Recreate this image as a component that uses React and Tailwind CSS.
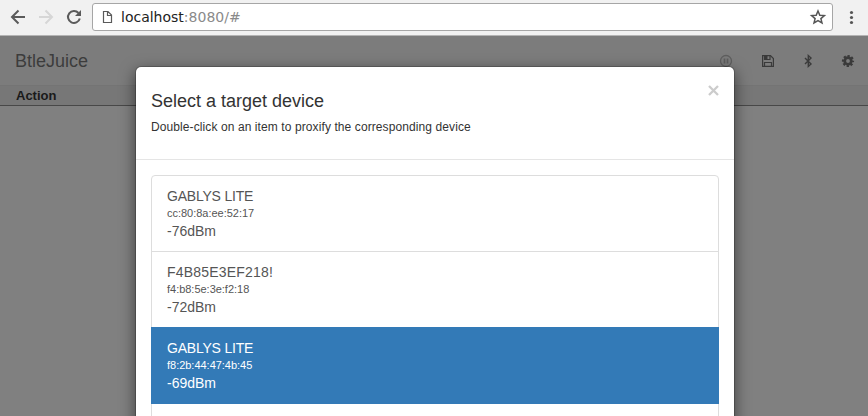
const devices = [
  { name: "GABLYS LITE", mac: "cc:80:8a:ee:52:17", rssi: "-76dBm" },
  { name: "F4B85E3EF218!", mac: "f4:b8:5e:3e:f2:18", rssi: "-72dBm", wide: true },
  { name: "GABLYS LITE", mac: "f8:2b:44:47:4b:45", rssi: "-69dBm", active: true },
  { name: "", mac: "", rssi: "" },
];

function BrowserBar() {
  return (
    <div className="flex h-9 shrink-0 items-start border-b border-[#b4b4b4] bg-[#f1f1f1]">
      <svg width="92" height="35" fill="none" strokeWidth="2">
        <path d="M25 17H12M18.500 10.500L12 17L18.500 23.500" stroke="#5a5a5a" />
        <path d="M39 17H52M45.500 10.500L52 17L45.500 23.500" stroke="#d6d6d6" />
        <path d="M78.500 13A6 6 0 1 0 79.800 18.500" stroke="#5a5a5a" />
        <path d="M81 10V16H75Z" fill="#5a5a5a" />
      </svg>
      <div className="mt-[3px] flex h-7 w-[741px] items-center rounded-[3px] border border-[#a6a6a6] bg-white">
        <svg width="28" height="26" fill="none" stroke="#5a5a5a" strokeWidth="1.200">
          <path d="M10.500 7.500H15L18.500 11V18.500H10.500ZM14.500 7.500V11.500H18.500" />
        </svg>
        <div className="flex-1 whitespace-nowrap font-['DejaVu_Sans',sans-serif] text-[14px] leading-[26px] text-[#8a8a8a]">
          <span className="text-[#222]">localhost</span>:8080/#
        </div>
        <svg width="28" height="26" fill="none" stroke="#555" strokeWidth="1.500">
          <path d="M14 7L15.800 11.200L20.400 11.600L16.900 14.600L18 19L14 16.700L10 19L11.100 14.600L7.600 11.600L12.200 11.200Z" />
        </svg>
      </div>
      <svg width="35" height="35" fill="#555">
        <circle cx="18.500" cy="12.500" r="1.600" />
        <circle cx="18.500" cy="17.500" r="1.600" />
        <circle cx="18.500" cy="22.500" r="1.600" />
      </svg>
    </div>
  );
}

function Toolbar() {
  return (
    <div className="flex h-[50px] shrink-0 items-center justify-between border-b border-[#747474] bg-[#7c7c7c] pl-[15px]">
      <span className="text-[18px] leading-5 text-[#3c3c3c]">BtleJuice</span>
      <svg width="154" height="50" fill="none" stroke="#3a3a3a">
        <g stroke="#5e5e5e">
          <circle cx="12" cy="25" r="5.500" strokeWidth="1.300" />
          <path d="M10.500 22.500V27.500M13.500 22.500V27.500" strokeWidth="1.700" />
        </g>
        <path d="M48.600 19.600H56.500L59.400 22.500V30.400H48.600Z" strokeWidth="1.200" />
        <path d="M50.500 30V26.500H57.500V30M50.500 20V23.500H56V20" strokeWidth="1.200" />
        <path d="M51 20H53.500V23.500H51Z" fill="#3a3a3a" stroke="none" />
        <path d="M91 22L97 28L94.300 30.500V19.500L97 22L91 28" strokeWidth="1.400" />
        <circle cx="134" cy="25" r="3.300" strokeWidth="2.800" />
        <circle cx="134" cy="25" r="5" strokeWidth="2.200" strokeDasharray="2.200 1.727" strokeDashoffset="1.100" />
      </svg>
    </div>
  );
}

function Device({ d }) {
  return (
    <div
      className={
        "-mb-px h-[77px] whitespace-nowrap border pl-[15px] pt-[10px] text-[14px] leading-5 first:rounded-t " +
        (d.active ? "relative border-[#337ab7] bg-[#337ab7] text-white" : "border-[#ddd] bg-white text-[#555]")
      }
    >
      <div className={d.wide ? "tracking-[0.2px]" : "tracking-[-0.21px]"}>{d.name}</div>
      <div className="text-[11px] leading-[15px] tracking-[-0.02px]">{d.mac}</div>
      <div>{d.rssi}</div>
    </div>
  );
}

export default function App() {
  return (
    <div className="relative flex h-[416px] w-[868px] flex-col overflow-hidden bg-[#808080] font-['Liberation_Sans',Arial,sans-serif]">
      <BrowserBar />
      <Toolbar />
      <div className="h-5 shrink-0 border-b border-[#484848] bg-[#777] pl-4 text-[13px] font-bold leading-[19px] text-[#1a1a1a]">
        Action
      </div>
      <div className="absolute left-[135px] top-[66px] h-[400px] w-[600px] rounded-md border border-black/20 bg-white bg-clip-padding shadow-[0_5px_15px_rgba(0,0,0,0.5)]">
        <div className="flex h-[93px] items-start justify-between border-b border-[#e5e5e5] px-[15px] text-[#333]">
          <div className="pt-6">
            <h4 className="text-[18px] leading-5">Select a target device</h4>
            <p className="mt-[6px] text-[12px] leading-5 tracking-[0.095px]">
              Double-click on an item to proxify the corresponding device
            </p>
          </div>
          <svg width="12" height="40" stroke="#ccc" strokeWidth="2.300">
            <path d="M2 19L11 28M11 19L2 28" />
          </svg>
        </div>
        <div className="p-[15px]">
          {devices.map((d, i) => (
            <Device key={i} d={d} />
          ))}
        </div>
      </div>
    </div>
  );
}
